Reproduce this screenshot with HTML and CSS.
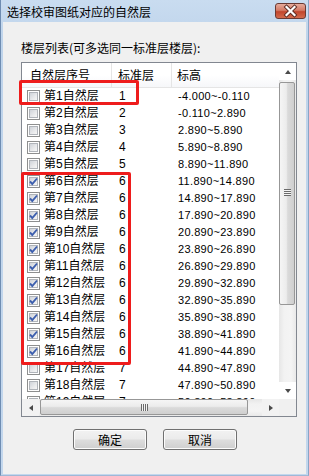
FILE: index.html
```html
<!DOCTYPE html>
<html>
<head>
<meta charset="utf-8">
<link rel="stylesheet" href="styles.css">
</head>
<body>
<div class="window">
  <div class="titlebar">
    <span class="title">选择校审图纸对应的自然层</span>
    <div class="close">
      <svg width="29" height="14" viewBox="0 0 29 14">
        <path d="M10.5 3 L18.5 11 M18.5 3 L10.5 11" stroke="#5a2a22" stroke-width="4" stroke-linecap="square"/>
        <path d="M10.5 3 L18.5 11 M18.5 3 L10.5 11" stroke="#ffffff" stroke-width="2.2" stroke-linecap="square"/>
      </svg>
    </div>
  </div>
  <div class="client">
    <div class="label">楼层列表(可多选同一标准层楼层):</div>
    <div class="listbox">
      <div class="view">
        <div class="header">
          <div class="hcol c1">自然层序号</div>
          <div class="hcol c2">标准层</div>
          <div class="hcol c3">标高</div>
        </div>
        <div class="rows">
          <div class="row"><div class="c1"><span class="cb"></span><span class="name">第1自然层</span></div><div class="c2">1</div><div class="c3 elev">-4.000~-0.110</div></div>
          <div class="row"><div class="c1"><span class="cb"></span><span class="name">第2自然层</span></div><div class="c2">2</div><div class="c3 elev">-0.110~2.890</div></div>
          <div class="row"><div class="c1"><span class="cb"></span><span class="name">第3自然层</span></div><div class="c2">3</div><div class="c3 elev">2.890~5.890</div></div>
          <div class="row"><div class="c1"><span class="cb"></span><span class="name">第4自然层</span></div><div class="c2">4</div><div class="c3 elev">5.890~8.890</div></div>
          <div class="row"><div class="c1"><span class="cb"></span><span class="name">第5自然层</span></div><div class="c2">5</div><div class="c3 elev">8.890~11.890</div></div>
          <div class="row"><div class="c1"><span class="cb on"><svg width="9" height="9" viewBox="0 0 9 9"><path d="M1 4.5 L3.3 7 L8 1.5" fill="none" stroke="#3d5fae" stroke-width="1.9"/></svg></span><span class="name">第6自然层</span></div><div class="c2">6</div><div class="c3 elev">11.890~14.890</div></div>
          <div class="row"><div class="c1"><span class="cb on"><svg width="9" height="9" viewBox="0 0 9 9"><path d="M1 4.5 L3.3 7 L8 1.5" fill="none" stroke="#3d5fae" stroke-width="1.9"/></svg></span><span class="name">第7自然层</span></div><div class="c2">6</div><div class="c3 elev">14.890~17.890</div></div>
          <div class="row"><div class="c1"><span class="cb on"><svg width="9" height="9" viewBox="0 0 9 9"><path d="M1 4.5 L3.3 7 L8 1.5" fill="none" stroke="#3d5fae" stroke-width="1.9"/></svg></span><span class="name">第8自然层</span></div><div class="c2">6</div><div class="c3 elev">17.890~20.890</div></div>
          <div class="row"><div class="c1"><span class="cb on"><svg width="9" height="9" viewBox="0 0 9 9"><path d="M1 4.5 L3.3 7 L8 1.5" fill="none" stroke="#3d5fae" stroke-width="1.9"/></svg></span><span class="name">第9自然层</span></div><div class="c2">6</div><div class="c3 elev">20.890~23.890</div></div>
          <div class="row"><div class="c1"><span class="cb on"><svg width="9" height="9" viewBox="0 0 9 9"><path d="M1 4.5 L3.3 7 L8 1.5" fill="none" stroke="#3d5fae" stroke-width="1.9"/></svg></span><span class="name">第10自然层</span></div><div class="c2">6</div><div class="c3 elev">23.890~26.890</div></div>
          <div class="row"><div class="c1"><span class="cb on"><svg width="9" height="9" viewBox="0 0 9 9"><path d="M1 4.5 L3.3 7 L8 1.5" fill="none" stroke="#3d5fae" stroke-width="1.9"/></svg></span><span class="name">第11自然层</span></div><div class="c2">6</div><div class="c3 elev">26.890~29.890</div></div>
          <div class="row"><div class="c1"><span class="cb on"><svg width="9" height="9" viewBox="0 0 9 9"><path d="M1 4.5 L3.3 7 L8 1.5" fill="none" stroke="#3d5fae" stroke-width="1.9"/></svg></span><span class="name">第12自然层</span></div><div class="c2">6</div><div class="c3 elev">29.890~32.890</div></div>
          <div class="row"><div class="c1"><span class="cb on"><svg width="9" height="9" viewBox="0 0 9 9"><path d="M1 4.5 L3.3 7 L8 1.5" fill="none" stroke="#3d5fae" stroke-width="1.9"/></svg></span><span class="name">第13自然层</span></div><div class="c2">6</div><div class="c3 elev">32.890~35.890</div></div>
          <div class="row"><div class="c1"><span class="cb on"><svg width="9" height="9" viewBox="0 0 9 9"><path d="M1 4.5 L3.3 7 L8 1.5" fill="none" stroke="#3d5fae" stroke-width="1.9"/></svg></span><span class="name">第14自然层</span></div><div class="c2">6</div><div class="c3 elev">35.890~38.890</div></div>
          <div class="row"><div class="c1"><span class="cb on"><svg width="9" height="9" viewBox="0 0 9 9"><path d="M1 4.5 L3.3 7 L8 1.5" fill="none" stroke="#3d5fae" stroke-width="1.9"/></svg></span><span class="name">第15自然层</span></div><div class="c2">6</div><div class="c3 elev">38.890~41.890</div></div>
          <div class="row"><div class="c1"><span class="cb on"><svg width="9" height="9" viewBox="0 0 9 9"><path d="M1 4.5 L3.3 7 L8 1.5" fill="none" stroke="#3d5fae" stroke-width="1.9"/></svg></span><span class="name">第16自然层</span></div><div class="c2">6</div><div class="c3 elev">41.890~44.890</div></div>
          <div class="row"><div class="c1"><span class="cb"></span><span class="name">第17自然层</span></div><div class="c2">7</div><div class="c3 elev">44.890~47.890</div></div>
          <div class="row"><div class="c1"><span class="cb"></span><span class="name">第18自然层</span></div><div class="c2">7</div><div class="c3 elev">47.890~50.890</div></div>
          <div class="row"><div class="c1"><span class="cb"></span><span class="name">第19自然层</span></div><div class="c2">7</div><div class="c3 elev">50.890~53.890</div></div>
        </div>
      </div>
      <div class="vscroll">
        <div class="sbtn"><span class="arr up"></span></div>
        <div class="vtrack"><div class="vthumb"><span class="grip-v"></span></div></div>
        <div class="sbtn"><span class="arr down"></span></div>
      </div>
      <div class="hscroll">
        <div class="sbtn"><span class="arr left"></span></div>
        <div class="htrack"><div class="hthumb"><span class="grip-h"></span></div></div>
        <div class="sbtn"><span class="arr right"></span></div>
      </div>
      <div class="corner"></div>
    </div>
    <div class="buttons">
      <button class="btn">确定</button>
      <button class="btn">取消</button>
    </div>
    <div class="mark mark1"></div>
    <div class="mark mark2"></div>
  </div>
</div>
</body>
</html>
```
FILE: styles.css
```css
* { box-sizing: border-box; }
html, body { margin: 0; padding: 0; }
body {
  width: 309px;
  height: 476px;
  overflow: hidden;
  font-family: "Liberation Sans", "Noto Sans CJK SC", sans-serif;
  font-size: 12px;
  color: #000;
}
.window {
  width: 309px;
  height: 476px;
  display: flex;
  flex-direction: column;
  background: linear-gradient(#c9dcf0, #bfd4eb 40px, #c3d7ed);
  border-left: 1px solid #6f8db2;
  border-right: 1px solid #8aa5c6;
  border-bottom: 1px solid #9fb8d6;
  padding: 0 2px 1px 2px;
}
.titlebar {
  height: 22px;
  flex: none;
  display: flex;
  align-items: flex-start;
}
.title {
  font-family: "Noto Sans CJK SC", sans-serif;
  font-size: 12px;
  line-height: 14px;
  padding: 5px 0 0 4px;
  color: #000;
}
.close {
  margin-left: auto;
  margin-top: 3px;
  width: 31px;
  height: 16px;
  border: 1px solid #6a3a33;
  border-radius: 3px;
  background: linear-gradient(#e6ab9c, #d47b66 45%, #c1462d 55%, #d36b4d);
  display: flex;
  align-items: center;
  justify-content: center;
}
.close svg { display: block; }
.client {
  flex: 1;
  position: relative;
  background: #f0f0f0;
  padding: 19px 0 0 18px;
}
.label {
  font-family: "Noto Sans CJK SC", sans-serif;
  font-size: 12px;
  line-height: 14px;
  height: 14px;
  white-space: nowrap;
}
.listbox {
  margin-top: 7px;
  width: 276px;
  height: 355px;
  border: 1px solid #828790;
  background: #fff;
  display: grid;
  grid-template-columns: 257px 17px;
  grid-template-rows: 336px 17px;
}
.view {
  overflow: hidden;
  grid-column: 1;
  grid-row: 1;
}
.header {
  height: 25px;
  display: flex;
  border-bottom: 1px solid #e5e5e5;
  background: linear-gradient(#ffffff, #ffffff 50%, #f6f7f9);
  font-family: "Noto Sans CJK SC", sans-serif;
  line-height: 24px;
}
.hcol { height: 24px; white-space: nowrap; }
.hcol.c1 { width: 90px; padding-left: 8px; border-right: 1px solid #e5e5e5; }
.hcol.c2 { width: 60px; padding-left: 6px; border-right: 1px solid #e5e5e5; }
.hcol.c3 { flex: 1; padding-left: 5px; }
.rows { height: 311px; overflow: hidden; }
.row {
  height: 17px;
  display: flex;
  align-items: center;
  white-space: nowrap;
  line-height: 17px;
}
.row .c1 { width: 90px; display: flex; align-items: center; padding-left: 5px; }
.row .c2 { width: 60px; padding-left: 7px; }
.row .c3 { flex: 1; padding-left: 6px; }
.name { margin-left: 4px; }
.elev { font-size: 11px; letter-spacing: 0.3px; }
.cb {
  width: 13px;
  height: 13px;
  flex: none;
  border: 1px solid #8e8f8f;
  background: #fff;
  padding: 1px;
  display: flex;
}
.cb::before {
  content: "";
  flex: 1;
  border: 1px solid #b0b4ba;
  background: linear-gradient(135deg, #cfd3d9, #e9eaec 60%, #f6f6f6);
}
.cb.on { position: relative; }
.cb.on svg { position: absolute; left: 1px; top: 1px; }

.vscroll {
  grid-column: 2;
  grid-row: 1;
  display: flex;
  flex-direction: column;
  background: linear-gradient(to right, #e6e6e6, #f2f2f2 30%, #f4f4f4 70%, #e9e9e9);
}
.sbtn {
  width: 17px;
  height: 17px;
  flex: none;
  display: flex;
  align-items: center;
  justify-content: center;
}
.vscroll .sbtn { background: #fff; }
.vtrack { flex: 1; padding: 2px 1px 0 0; }
.vthumb {
  height: 223px;
  width: 16px;
  border: 1px solid #979797;
  border-radius: 2px;
  background: linear-gradient(to right, #f5f5f5, #ececec 45%, #dadada 55%, #cfcfcf);
  display: flex;
  align-items: center;
  justify-content: center;
}
.grip-v {
  width: 7px;
  height: 7px;
  background: repeating-linear-gradient(#6b6b6b 0 1px, #f4f4f4 1px 2px);
  margin-top: -3px;
}
.hscroll {
  grid-column: 1;
  grid-row: 2;
  display: flex;
  background: linear-gradient(#e6e6e6, #f2f2f2 30%, #f4f4f4 70%, #e9e9e9);
}
.hscroll .sbtn { background: #f2f2f2; }
.htrack { flex: 1; padding: 0 0 0 1px; display: flex; }
.hthumb {
  width: 208px;
  height: 16px;
  border: 1px solid #979797;
  border-radius: 2px;
  background: linear-gradient(#f5f5f5, #ececec 45%, #dadada 55%, #cfcfcf);
  display: flex;
  align-items: center;
  justify-content: center;
}
.grip-h {
  width: 7px;
  height: 7px;
  background: repeating-linear-gradient(to right, #6b6b6b 0 1px, #f4f4f4 1px 2px);
}
.corner { grid-column: 2; grid-row: 2; background: #f0f0f0; }
.arr { width: 0; height: 0; border-style: solid; }
.arr.up { border-width: 0 3.5px 4px 3.5px; border-color: transparent transparent #4a4a4a transparent; }
.arr.down { border-width: 4px 3.5px 0 3.5px; border-color: #4a4a4a transparent transparent transparent; }
.arr.left { border-width: 3.5px 4px 3.5px 0; border-color: transparent #4a4a4a transparent transparent; }
.arr.right { border-width: 3.5px 0 3.5px 4px; border-color: transparent transparent transparent #4a4a4a; }

.buttons {
  display: flex;
  gap: 16px;
  padding-left: 52px;
  margin-top: 12px;
}
.btn {
  width: 74px;
  height: 21px;
  padding: 0;
  border: 1px solid #707070;
  border-radius: 3px;
  background: linear-gradient(#f2f2f2, #ebebeb 48%, #dddddd 52%, #cfcfcf);
  font-family: "Noto Sans CJK SC", sans-serif;
  font-size: 12px;
  line-height: 18px;
  color: #000;
  box-shadow: inset 0 0 0 1px #fcfcfc;
}
.mark {
  position: absolute;
  border: 3px solid #ee1c1c;
  border-radius: 2px;
  pointer-events: none;
}
.mark1 { left: 16px; top: 58px; width: 120px; height: 25px; }
.mark2 { left: 18px; top: 150px; width: 110px; height: 193px; }
```
